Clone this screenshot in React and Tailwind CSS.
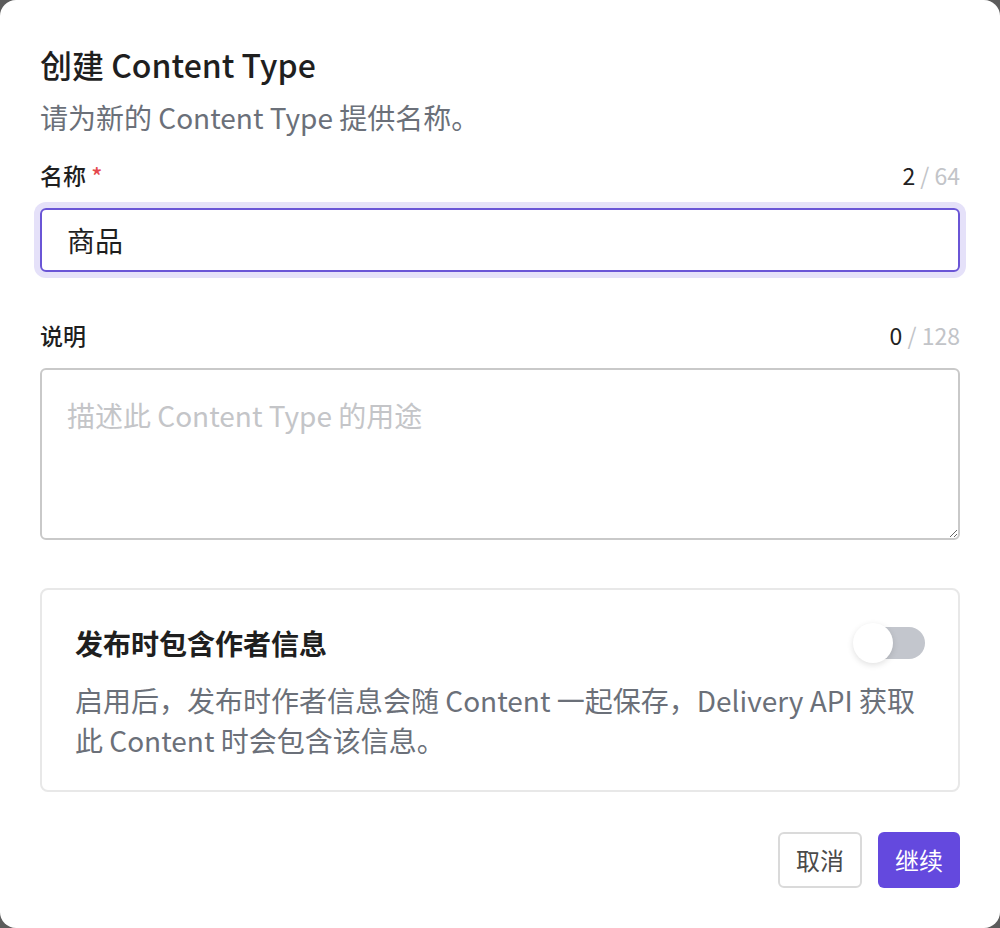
import React from "react";

export default function App() {
  const [name, setName] = React.useState("商品");
  const [desc, setDesc] = React.useState("");
  const [withAuthor, setWithAuthor] = React.useState(false);

  return (
    <div className="h-[928px] w-[1000px] bg-[#5c5c5c] font-['Noto_Sans_CJK_SC',sans-serif]">
      <div className="flex h-full w-full flex-col rounded-[16px] bg-white px-10 pt-[44px]">
        <h2 className="text-[32px] leading-[40px] font-medium text-[#1f1f1f]">
          创建 Content Type
        </h2>
        <p className="mt-[13px] text-[28px] leading-[40px] text-[#6b7079]">
          请为新的 Content Type 提供名称。
        </p>

        <div className="mt-[22px] flex items-center justify-between text-[23px] leading-[32px]">
          <span className="font-medium text-[#1f1f1f]">
            名称 <span className="text-[#e5484d]">*</span>
          </span>
          <span className="text-[#222]">
            {name.length} <span className="text-[#c2c4c8]">/ 64</span>
          </span>
        </div>
        <input
          value={name}
          onChange={(e) => setName(e.target.value)}
          className="mt-[17px] h-16 w-full rounded-[6px] border-2 border-[#6a55d6] px-[25px] text-[28px] text-[#1f1f1f] outline-none ring-[6px] ring-[#e5e1f9]"
        />

        <div className="mt-[47px] flex items-center justify-between text-[23px] leading-[32px]">
          <span className="font-medium text-[#1f1f1f]">说明</span>
          <span className="text-[#222]">
            {desc.length} <span className="text-[#c2c4c8]">/ 128</span>
          </span>
        </div>
        <textarea
          value={desc}
          onChange={(e) => setDesc(e.target.value)}
          placeholder="描述此 Content Type 的用途"
          className="mt-[17px] h-[172px] w-full resize-y rounded-[6px] border-2 border-[#c9c9c9] px-[25px] pt-[25px] text-[28px] leading-[40px] text-[#1f1f1f] outline-none placeholder:text-[#c4c5c8]"
        />

        <div className="mt-12 rounded-[8px] border-2 border-[#e8e8e8] px-[33px] pt-[35px] pb-[30px]">
          <div className="flex items-center justify-between">
            <span className="text-[28px] leading-[36px] font-bold text-[#1f1f1f]">
              发布时包含作者信息
            </span>
            <button
              onClick={() => setWithAuthor(!withAuthor)}
              className={
                withAuthor
                  ? "relative h-8 w-[68px] rounded-full bg-[#6347de]"
                  : "relative h-8 w-[68px] rounded-full bg-[#c3c6cd]"
              }
            >
              <span
                className={
                  withAuthor
                    ? "absolute top-[-4px] right-[-4px] h-10 w-10 rounded-full bg-white shadow-[0_2px_6px_rgba(0,0,0,0.12)]"
                    : "absolute top-[-4px] left-[-4px] h-10 w-10 rounded-full bg-white shadow-[0_2px_6px_rgba(0,0,0,0.12)]"
                }
              />
            </button>
          </div>
          <p className="mt-[19px] text-[28px] leading-[40px] text-[#6b7079]">
            启用后，发布时作者信息会随 Content 一起保存，Delivery API 获取此 Content 时会包含该信息。
          </p>
        </div>

        <div className="mt-10 flex justify-end gap-4">
          <button className="h-14 w-[84px] rounded-[6px] border-2 border-[#dadada] text-[24px] text-[#4a4a4a]">
            取消
          </button>
          <button className="h-14 w-[82px] rounded-[6px] bg-[#6449de] text-[24px] text-white">
            继续
          </button>
        </div>
      </div>
    </div>
  );
}
